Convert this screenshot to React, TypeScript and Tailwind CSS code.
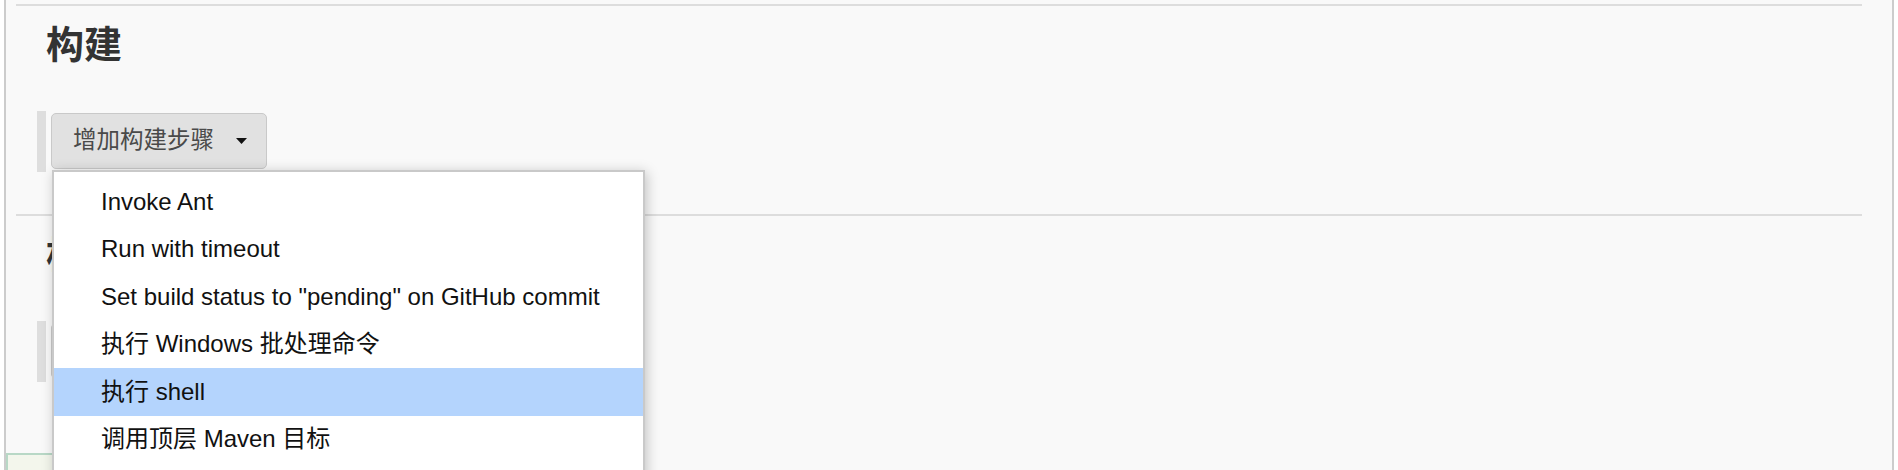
import { useState } from 'react'

type Step = { id: string; label: string }

const steps: Step[] = [
  { id: 'ant', label: 'Invoke Ant' },
  { id: 'timeout', label: 'Run with timeout' },
  { id: 'github', label: 'Set build status to "pending" on GitHub commit' },
  { id: 'bat', label: '执行 Windows 批处理命令' },
  { id: 'shell', label: '执行 shell' },
  { id: 'maven', label: '调用顶层 Maven 目标' },
]

function Caret() {
  return (
    <svg width="11" height="6" viewBox="0 0 11 6" className="ml-[22px]">
      <path d="M0 0h11L5.5 6z" fill="#111" />
    </svg>
  )
}

function AddButton({ label }: { label: string }) {
  return (
    <div className="flex ml-[21px] h-[61px]">
      <div className="w-[9px] h-full bg-[#dedede]" />
      <button className="ml-[5px] mt-[2px] h-[56px] w-[216px] flex items-center pl-[21px] rounded-[5px] border border-[#c9c9c9] bg-[#e1e1e1] text-[23.5px] text-[#4a4a4a]">
        {label}
        <Caret />
      </button>
    </div>
  )
}

function Section({ title, children }: { title: string; children: React.ReactNode }) {
  return (
    <div className="ml-[10px] mr-[30px] border-t-2 border-[#dddddd] pb-[42px]">
      <h2 className="pl-[30px] pt-[17px] h-[105px] text-[38px] leading-[44px] font-bold text-[#333]">{title}</h2>
      {children}
    </div>
  )
}

export default function App() {
  const [ativo, setAtivo] = useState('shell')

  return (
    <div className="relative h-[470px] w-[1898px] overflow-hidden bg-white" style={{ fontFamily: '"Liberation Sans", "Noto Sans CJK SC", sans-serif' }}>
      <div className="ml-[4px] w-[1890px] h-full border-x-2 border-[#cccccc] bg-[#f9f9f9] pt-[4px]">
        <Section title="构建">
          <AddButton label="增加构建步骤" />
        </Section>
        <Section title="构建后操作">
          <AddButton label="增加构建后操作步骤" />
        </Section>
        <div className="mt-[29px] w-[200px] h-[40px] border-t-2 border-l-2 border-[#b8d8c6] bg-[#f3f6ec]" />
      </div>

      <div className="absolute left-[52px] top-[170px] w-[593px] border-2 border-[#c9c9c9] bg-white pt-[6px] pb-[60px] shadow-[2px_2px_12px_rgba(0,0,0,0.22)]">
        {steps.map((s) => (
          <div
            key={s.id}
            onMouseEnter={() => setAtivo(s.id)}
            className={
              'h-[47.5px] flex items-center pl-[47px] text-[24px] text-[#111] ' +
              (ativo === s.id ? 'bg-[#b4d4fd]' : '')
            }
          >
            {s.label}
          </div>
        ))}
      </div>
    </div>
  )
}
